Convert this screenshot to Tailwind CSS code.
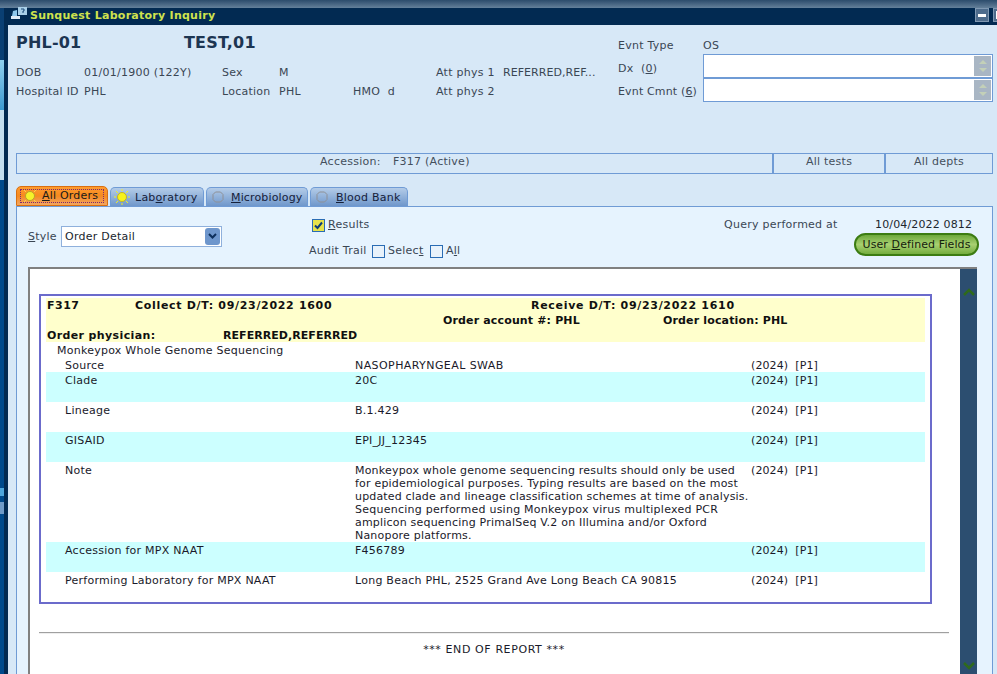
<!DOCTYPE html>
<html lang="en">
<head>
<meta charset="UTF-8">
<title>Sunquest Laboratory Inquiry</title>
<script src="https://cdn.jsdelivr.net/npm/@tailwindcss/browser@4"></script>
</head>
<body class="w-[997px] h-[674px] overflow-hidden bg-[#d7e8f7] font-['DejaVu_Sans',sans-serif] text-[11px] leading-[16px] tracking-[0.25px] text-[#3a4654]">
<!-- title bar -->
<div class="h-[8px] bg-gradient-to-b from-[#2c4c6c] to-[#64809a]"></div>
<div class="flex h-[666px]">
    <!-- desktop strip behind the window -->
    <div class="w-[4px] flex flex-col bg-[#004a8c]">
        <div class="h-[52px] bg-[#0a3f73]"></div>
        <div class="h-[50px] bg-gradient-to-b from-[#8fd0ee] to-[#3c9ad0]"></div>
        <div class="h-[70px] bg-[#c4dff0]"></div>
        <div class="h-[308px]"></div>
        <div class="h-[8px] bg-[#4ea6dc]"></div>
        <div class="h-[6px]"></div>
        <div class="h-[12px] bg-[#6f9bc8]"></div>
    </div>
    <div class="w-[4px] bg-[#022a52]"></div>
    <div class="flex-1 flex flex-col min-w-0">
        <div class="h-[17px] bg-[#022a52] flex items-center relative">
            <svg class="absolute left-[2px] -top-[2px]" width="18" height="14" viewBox="0 0 18 14">
                <path d="M1 10h9v3H1z" fill="#dfeaf4"/>
                <path d="M3 5l4-1v6H2z" fill="#8fc7ea"/>
                <rect x="8" y="1" width="9" height="8" fill="#a9cfe8"/>
                <path d="M11 3h3v2h-1v2" fill="none" stroke="#1c4a78" stroke-width="1"/>
            </svg>
            <span class="ml-[22px] -mt-[2px] font-bold text-[#cfe24e] tracking-[0.26px]">Sunquest Laboratory Inquiry</span>
            <div class="ml-auto flex gap-[4px] -mr-[10px] -mt-[3px]">
                <div class="w-[14px] h-[14px] bg-[#4e6c8c] border border-[#7f98b2] flex items-center justify-center"><div class="w-[8px] h-[3px] bg-white"></div></div>
                <div class="w-[14px] h-[14px] bg-[#4e6c8c] border border-[#7f98b2] flex items-center justify-center"><div class="w-[8px] h-[8px] bg-white"></div></div>
            </div>
        </div>

        <div class="flex-1 flex flex-col pl-[8px] pr-[4px] min-h-0">
            <!-- patient header -->
            <div class="h-[128px] flex">
                <div class="w-[602px]">
                    <div class="flex h-[17px] mt-[9px] items-center font-bold text-[16px] tracking-[0.2px] text-[#1c3552]">
                        <span class="w-[168px]">PHL-01</span>
                        <span>TEST,01</span>
                    </div>
                    <div class="flex mt-[14px] h-[14px]">
                        <span class="w-[68px]">DOB</span>
                        <span class="w-[138px]">01/01/1900 (122Y)</span>
                        <span class="w-[57px]">Sex</span>
                        <span class="w-[157px]">M</span>
                        <span class="w-[67px]">Att phys 1</span>
                        <span class="tracking-[0.05px]">REFERRED,REF...</span>
                    </div>
                    <div class="flex mt-[5px] h-[14px]">
                        <span class="w-[68px]">Hospital ID</span>
                        <span class="w-[138px]">PHL</span>
                        <span class="w-[57px]">Location</span>
                        <span class="w-[74px]">PHL</span>
                        <span class="w-[83px]">HMO&nbsp; d</span>
                        <span>Att phys 2</span>
                    </div>
                </div>
                <div class="flex-1">
                    <div class="flex h-[14px] mt-[13px]">
                        <span class="w-[85px]">Evnt Type</span>
                        <span>OS</span>
                    </div>
                    <div class="flex h-[24px] mt-[2px] items-center">
                        <span class="w-[85px] pt-[5px]">Dx&nbsp; (<u>0</u>)</span>
                        <div class="flex-1 h-[24px] bg-white border border-[#6f9bd5] flex justify-end p-[1px]">
                            <div class="w-[17px] bg-[#a9b6c4] flex flex-col items-center justify-center gap-[4px]">
                                <svg width="8" height="4" viewBox="0 0 8 4"><path d="M0 4l4-4 4 4z" fill="#c3d0b8"/></svg>
                                <svg width="8" height="4" viewBox="0 0 8 4"><path d="M0 0l4 4 4-4z" fill="#c3d0b8"/></svg>
                            </div>
                        </div>
                    </div>
                    <div class="flex h-[24px] items-center">
                        <span class="w-[85px] pt-[4px] whitespace-nowrap tracking-[0.15px]">Evnt Cmnt (<u>6</u>)</span>
                        <div class="flex-1 h-[24px] bg-white border border-[#6f9bd5] flex justify-end p-[1px]">
                            <div class="w-[17px] bg-[#a9b6c4] flex flex-col items-center justify-center gap-[4px]">
                                <svg width="8" height="4" viewBox="0 0 8 4"><path d="M0 4l4-4 4 4z" fill="#c3d0b8"/></svg>
                                <svg width="8" height="4" viewBox="0 0 8 4"><path d="M0 0l4 4 4-4z" fill="#c3d0b8"/></svg>
                            </div>
                        </div>
                    </div>
                </div>
            </div>

            <!-- accession bar -->
            <div class="flex h-[21px] border border-[#6f9bd5] text-[#444f5c]">
                <div class="w-[755px] pl-[303px] flex">
                    <span class="w-[73px]">Accession:</span>
                    <span>F317 (Active)</span>
                </div>
                <div class="w-[112px] border-l-2 border-[#6f9bd5] text-center">All tests</div>
                <div class="flex-1 border-l-2 border-[#6f9bd5] text-center">All depts</div>
            </div>

            <!-- tabs -->
            <div class="flex gap-[2px] mt-[12px] h-[20px] items-end">
                <div class="w-[92px] h-[20px] rounded-t-[5px] bg-gradient-to-b from-[#ff9a2e] via-[#f58a1f] to-[#f2a65e] border border-[#d96f10] flex items-center text-[#1a1a1a] tracking-[0.2px]">
                    <div class="mx-[3px] flex-1 h-[14px] border border-dotted border-[#7a2a70] flex items-center pl-[1px] gap-[4px]">
                        <svg width="16" height="14" viewBox="0 0 16 14">
                            <circle cx="8" cy="7" r="4.5" fill="#f6f22a" stroke="#b9a52a"/>
                            <path d="M2 1l2 2M14 1l-2 2M2 13l2-2M14 13l-2-2" stroke="#f6d84a"/>
                        </svg>
                        <span class="whitespace-nowrap"><u>A</u>ll Orders</span>
                    </div>
                </div>
                <div class="w-[94px] h-[19px] rounded-t-[5px] bg-gradient-to-b from-[#b4cce8] to-[#6f97cb] border-t border-x border-[#6f9bd5] flex items-center pl-[3px] gap-[5px] text-[#16213a]">
                    <svg width="16" height="16" viewBox="0 0 16 16">
                        <circle cx="8" cy="8" r="4.5" fill="#f6f21a" stroke="#c2b32a"/>
                        <path d="M8 0v2M8 14v2M0 8h2M14 8h2M2 2l2 2M14 2l-2 2M2 14l2-2M14 14l-2-2" stroke="#f6f21a"/>
                    </svg>
                    <span class="pt-[1px]">Lab<u>o</u>ratory</span>
                </div>
                <div class="w-[102px] h-[19px] rounded-t-[5px] bg-gradient-to-b from-[#b4cce8] to-[#6f97cb] border-t border-x border-[#6f9bd5] flex items-center pl-[5px] gap-[7px] text-[#16213a]">
                    <svg width="12" height="12" viewBox="0 0 12 12"><path d="M3.5 1h5L11 3.5v5L8.5 11h-5L1 8.5v-5z" fill="none" stroke="#8e9096"/></svg>
                    <span class="pt-[1px] tracking-[0.15px]"><u>M</u>icrobiology</span>
                </div>
                <div class="w-[98px] h-[19px] rounded-t-[5px] bg-gradient-to-b from-[#b4cce8] to-[#6f97cb] border-t border-x border-[#6f9bd5] flex items-center pl-[5px] gap-[8px] text-[#16213a]">
                    <svg width="12" height="12" viewBox="0 0 12 12"><path d="M3.5 1h5L11 3.5v5L8.5 11h-5L1 8.5v-5z" fill="none" stroke="#8e9096"/></svg>
                    <span class="pt-[1px]"><u>B</u>lood Bank</span>
                </div>
            </div>

            <!-- tab panel -->
            <div class="flex-1 min-h-0 bg-[#e6f3fe] border-x border-t border-[#6f9bd5] flex flex-col pl-[11px] pr-[15px]">
                <div class="h-[60px] flex">
                    <div class="w-[281px] flex items-center h-[20px] mt-[19px]">
                        <span class="w-[33px] pt-[2px]"><u>S</u>tyle</span>
                        <div class="w-[161px] h-[21px] bg-white border border-[#8fb0dc] flex items-center justify-between pl-[3px] pr-[1px] text-[#20262e]">
                            <span class="pt-[1px]">Order Detail</span>
                            <div class="w-[15px] h-[17px] rounded-[3px] bg-[#6e96cc] flex items-center justify-center">
                                <svg width="9" height="7" viewBox="0 0 9 7"><path d="M1 1l3.5 3.5L8 1" fill="none" stroke="#0d2f5c" stroke-width="2"/></svg>
                            </div>
                        </div>
                    </div>
                    <div class="w-[415px]">
                        <div class="flex items-center h-[14px] mt-[11px] ml-[3px] gap-[3px]">
                            <div class="w-[13px] h-[13px] bg-[#e6e24c] border border-[#2a6cb4] flex items-center justify-center">
                                <svg width="9" height="9" viewBox="0 0 9 9"><path d="M1 4.5l2.5 2.5L8 1.5" fill="none" stroke="#0c3a78" stroke-width="2"/></svg>
                            </div>
                            <span><u>R</u>esults</span>
                        </div>
                        <div class="flex items-center h-[14px] mt-[12px]">
                            <span class="w-[63px] whitespace-nowrap">Audit Trail</span>
                            <div class="w-[13px] h-[13px] bg-[#e8f2fb] border border-[#2a6cb4]"></div>
                            <span class="ml-[3px] w-[42px]">Selec<u>t</u></span>
                            <div class="w-[13px] h-[13px] bg-[#e8f2fb] border border-[#2a6cb4]"></div>
                            <span class="ml-[3px]">A<u>l</u>l</span>
                        </div>
                    </div>
                    <div class="flex-1 relative">
                        <div class="flex h-[14px] mt-[10px]">
                            <span class="w-[151px] whitespace-nowrap">Query performed at</span>
                            <span class="whitespace-nowrap text-[#20262e] tracking-[0.15px]">10/04/2022 0812</span>
                        </div>
                        <div class="absolute left-[130px] top-[26px] w-[125px] h-[23px] rounded-full border-2 border-[#3c7c12] bg-gradient-to-b from-[#6da83a] via-[#a8d070] to-[#74ad3e] flex items-center justify-center text-[#14210c] tracking-[0.1px]"><span class="pt-[1px] whitespace-nowrap">User <u>D</u>efined Fields</span></div>
                    </div>
                </div>

                <!-- report area -->
                <div class="flex-1 min-h-0 flex bg-white border-t-2 border-l-2 border-[#808080] overflow-hidden">
                    <div class="w-[930px] shrink-0 pl-[9px] pr-[11px] pt-[25px] text-[#1a1a2a]">
                        <div class="w-[893px] h-[310px] border-2 border-[#6b6bcb] px-[5px] pt-[2px]">
                            <div class="h-[44px] bg-[#ffffcc] font-bold text-[#101010] pl-[1px]">
                                <div class="flex h-[15px]">
                                    <span class="w-[88px] tracking-[0.5px]">F317</span>
                                    <span class="w-[396px] whitespace-nowrap tracking-[0.68px]">Collect D/T: 09/23/2022 1600</span>
                                    <span class="whitespace-nowrap tracking-[0.7px]">Receive D/T: 09/23/2022 1610</span>
                                </div>
                                <div class="flex h-[15px] pl-[396px] tracking-[0.15px]">
                                    <span class="w-[220px] whitespace-nowrap">Order account #: PHL</span>
                                    <span class="whitespace-nowrap">Order location: PHL</span>
                                </div>
                                <div class="flex h-[14px]">
                                    <span class="w-[176px] tracking-[0.37px]">Order physician:</span>
                                    <span class="tracking-[0.05px]">REFERRED,REFERRED</span>
                                </div>
                            </div>
                            <div class="h-[16px] pl-[11px] pt-[1px]">Monkeypox Whole Genome Sequencing</div>
                            <div class="flex h-[14px] pl-[19px]">
                                <span class="w-[290px]">Source</span>
                                <span class="w-[396px] tracking-[0.42px]">NASOPHARYNGEAL SWAB</span>
                                <span class="tracking-[0.1px]">(2024)&nbsp; [P1]</span>
                            </div>
                            <div class="flex h-[30px] pl-[19px] pt-[1px] bg-[#ccffff]">
                                <span class="w-[290px]">Clade</span>
                                <span class="w-[396px]">20C</span>
                                <span class="tracking-[0.1px]">(2024)&nbsp; [P1]</span>
                            </div>
                            <div class="flex h-[30px] pl-[19px] pt-[1px]">
                                <span class="w-[290px]">Lineage</span>
                                <span class="w-[396px]">B.1.429</span>
                                <span class="tracking-[0.1px]">(2024)&nbsp; [P1]</span>
                            </div>
                            <div class="flex h-[30px] pl-[19px] pt-[1px] bg-[#ccffff]">
                                <span class="w-[290px]">GISAID</span>
                                <span class="w-[396px]">EPI_JJ_12345</span>
                                <span class="tracking-[0.1px]">(2024)&nbsp; [P1]</span>
                            </div>
                            <div class="flex h-[80px] pl-[19px] leading-[13px] pt-[2px]">
                                <span class="w-[290px]">Note</span>
                                <div class="w-[396px] whitespace-nowrap tracking-[0.2px]">
                                    <div>Monkeypox whole genome sequencing results should only be used</div>
                                    <div>for epidemiological purposes. Typing results are based on the most</div>
                                    <div class="tracking-[0.16px]">updated clade and lineage classification schemes at time of analysis.</div>
                                    <div class="tracking-[0.25px]">Sequencing performed using Monkeypox virus multiplexed PCR</div>
                                    <div>amplicon sequencing PrimalSeq V.2 on Illumina and/or Oxford</div>
                                    <div>Nanopore platforms.</div>
                                </div>
                                <span class="tracking-[0.1px]">(2024)&nbsp; [P1]</span>
                            </div>
                            <div class="flex h-[30px] pl-[19px] pt-[1px] bg-[#ccffff]">
                                <span class="w-[290px]">Accession for MPX NAAT</span>
                                <span class="w-[396px]">F456789</span>
                                <span class="tracking-[0.1px]">(2024)&nbsp; [P1]</span>
                            </div>
                            <div class="flex h-[14px] pl-[19px] pt-[1px]">
                                <span class="w-[290px] whitespace-nowrap">Performing Laboratory for MPX NAAT</span>
                                <span class="w-[396px] whitespace-nowrap">Long Beach PHL, 2525 Grand Ave Long Beach CA 90815</span>
                                <span class="tracking-[0.1px]">(2024)&nbsp; [P1]</span>
                            </div>
                        </div>
                        <div class="mt-[28px] border-t border-[#a0a0a0] shadow-[0_1px_0_#eeeeee]"></div>
                        <div class="mt-[9px] text-center tracking-[0.6px]">*** END OF REPORT ***</div>
                    </div>
                    <!-- scrollbar -->
                    <div class="w-[17px] bg-[#2c4e70] flex flex-col items-center justify-between pt-[19px] pb-[4px]">
                        <svg width="12" height="8" viewBox="0 0 12 8"><path d="M1 7l5-5 5 5" fill="none" stroke="#2f6a1c" stroke-width="2.5"/></svg>
                        <svg width="12" height="8" viewBox="0 0 12 8"><path d="M1 1l5 5 5-5" fill="none" stroke="#2f6a1c" stroke-width="2.5"/></svg>
                    </div>
                </div>
            </div>
        </div>
    </div>
</div>
</body>
</html>
